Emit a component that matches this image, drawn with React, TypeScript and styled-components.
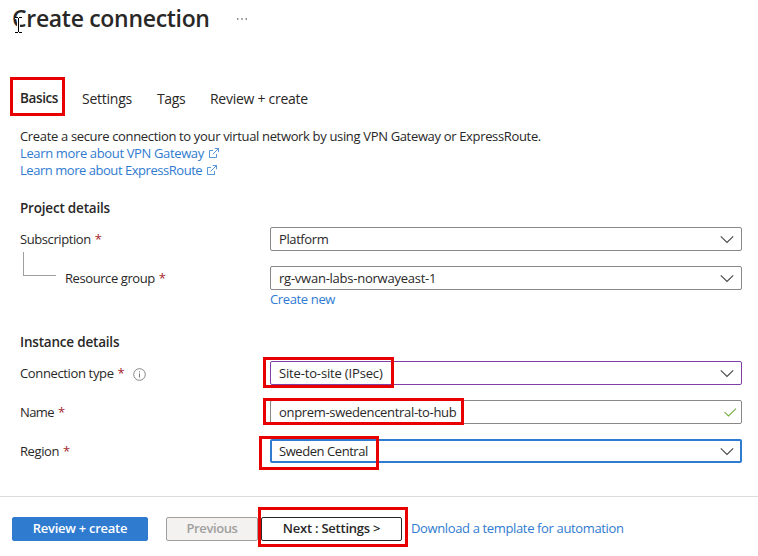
import React from 'react';
import styled, { createGlobalStyle, css } from 'styled-components';

const GlobalStyle = createGlobalStyle`
  * { box-sizing: border-box; }
  body {
    margin: 0;
    background: #fff;
    color: #292827;
    font: 13px/17px "Open Sans", "Noto Sans", sans-serif;
    letter-spacing: -0.36px;
    overflow: hidden;
  }
`;

type Track = { $track?: number };
const tracking = css<Track>`
  ${(p) => p.$track !== undefined && `letter-spacing: ${p.$track}px;`}
`;

const Page = styled.main`
  position: relative;
  width: 758px;
  height: 556px;
  display: flex;
  flex-direction: column;
  white-space: nowrap;
`;

const Header = styled.header`
  display: flex;
  height: 77px;
  padding: 2px 0 0 12px;
`;

const Title = styled.h1`
  margin: 0;
  width: 224px;
  font-size: 23px;
  line-height: 32px;
  font-weight: 600;
  letter-spacing: -0.31px;
`;

const MoreIcon = styled.svg`
  width: 12px;
  height: 2px;
  margin-top: 16px;
`;

const Tabs = styled.nav`
  display: flex;
  height: 42px;
  padding: 13px 0 0 20px;
`;

const Tab = styled.span<Track & { $active?: boolean; $width: number }>`
  width: ${(p) => p.$width}px;
  font-size: ${(p) => (p.$active ? 13.5 : 14)}px;
  font-weight: ${(p) => (p.$active ? 600 : 400)};
  ${tracking}
`;

const Intro = styled.section`
  padding: 9px 0 0 20px;
  height: 81px;
`;

const Paragraph = styled.p`
  margin: 0;
  letter-spacing: -0.34px;
`;

const Link = styled.a<Track>`
  color: #2f7bd0;
  text-decoration: none;
  ${tracking}
`;

const LinkLine = styled.div`
  display: flex;
  align-items: center;
  gap: 5px;
  height: 17px;
`;

const LinkIcon = styled.svg`
  width: 10px;
  height: 10px;
  margin-top: -1px;
`;

const Section = styled.section<{ $height: number }>`
  height: ${(p) => p.$height}px;
  padding: 0 16px 0 20px;
`;

const SectionTitle = styled.h2`
  margin: 0;
  height: 27px;
  font-size: 13.5px;
  line-height: 17px;
  font-weight: 600;
  letter-spacing: -0.2px;
`;

const Row = styled.div`
  display: grid;
  grid-template-columns: 250px 472px;
  height: 24px;
  margin-bottom: 15px;
`;

const Label = styled.label<Track & { $nested?: boolean }>`
  display: flex;
  align-items: flex-start;
  padding-top: 4px;
  padding-left: ${(p) => (p.$nested ? 3 : 0)}px;
  ${tracking}
`;

const Required = styled.span`
  margin-left: 4px;
  color: #a4262c;
  font-size: 13px;
`;

const Branch = styled.span`
  width: 33px;
  height: 24px;
  margin: -18px 9px 0 0;
  border-left: 1px solid #a19f9d;
  border-bottom: 1px solid #a19f9d;
`;

const InfoIcon = styled.svg`
  width: 13px;
  height: 13px;
  margin: 3px 0 0 9px;
`;

const fieldTone = {
  plain: '1px solid #8a8886',
  edited: '1px solid #7f3fa6',
  focused: '2px solid #2f7bd0',
};

const Field = styled.div<Track & { $tone: keyof typeof fieldTone }>`
  display: flex;
  align-items: center;
  justify-content: space-between;
  height: 24px;
  padding: 0 ${(p) => (p.$tone === 'focused' ? 7 : 8)}px;
  border: ${(p) => fieldTone[p.$tone]};
  border-radius: 2px;
  ${tracking}
`;

const FieldHint = styled.div`
  padding-top: 1px;
`;

const FieldIcon = styled.svg<{ $shift?: number }>`
  width: 14px;
  height: 9px;
  margin-right: ${(p) => p.$shift ?? -1}px;
`;

const Footer = styled.footer`
  display: flex;
  height: 60px;
  padding: 20px 0 0 12px;
  border-top: 1px solid #dcdbda;
`;

const buttonTone = {
  primary: css`background: #2f7bd0; border-color: #2f7bd0; color: #fff;`,
  disabled: css`background: #f3f2f1; border-color: #a19f9d; color: #a19f9d;`,
  secondary: css`background: #fff; border-color: #292827; color: #292827;`,
};

const Button = styled.button<Track & { $tone: keyof typeof buttonTone; $width: number; $gap: number }>`
  width: ${(p) => p.$width}px;
  height: 24px;
  margin: 0 ${(p) => p.$gap}px 0 0;
  padding: 0 0 1px;
  border: 1px solid;
  border-radius: 2px;
  font: 600 13px/17px "Open Sans", "Noto Sans", sans-serif;
  ${(p) => buttonTone[p.$tone]}
  ${tracking}
`;

const FooterLink = styled(Link)`
  padding-top: 3px;
`;

const Highlight = styled.div<{ $x: number; $y: number; $w: number; $h: number }>`
  position: absolute;
  left: ${(p) => p.$x}px;
  top: ${(p) => p.$y}px;
  width: ${(p) => p.$w}px;
  height: ${(p) => p.$h}px;
  border: 3px solid #e80000;
  pointer-events: none;
`;

const TextCursor = styled.svg`
  position: absolute;
  left: 15px;
  top: 17px;
  width: 7px;
  height: 16px;
`;

const External = () => (
  <LinkIcon viewBox="0 0 10 10" fill="none" stroke="#2f7bd0" strokeWidth="0.8">
    <path d="M4 2.5H.5v7h7V6M5.8.5h3.7v3.7M9.5.5 3.7 6.3" />
  </LinkIcon>
);

const Chevron = () => (
  <FieldIcon viewBox="0 0 14 9" fill="none" stroke="#484644" strokeWidth="1.1">
    <path d="M.8 1.3 7 7.4l6.2-6.1" />
  </FieldIcon>
);

const Check = () => (
  <FieldIcon $shift={-4} viewBox="0 0 14 9" fill="none" stroke="#76b043" strokeWidth="1.1">
    <path d="M1.5 4.2 5.5 8 13 .7" />
  </FieldIcon>
);

const Info = () => (
  <InfoIcon viewBox="0 0 13 13" fill="none" stroke="#797775">
    <circle cx="6.5" cy="6.5" r="5.8" strokeWidth="0.9" />
    <path d="M6.5 5.5v4M6.5 3.3v1.1" />
  </InfoIcon>
);

export default function App() {
  return (
    <>
      <GlobalStyle />
      <Page>
        <Header>
          <Title>Create connection</Title>
          <MoreIcon viewBox="0 0 12 2" fill="#6b6967">
            <path d="M1 .3h1.4v1.4H1zM5.3.3h1.4v1.4H5.3zM9.6.3H11v1.4H9.6z" />
          </MoreIcon>
        </Header>

        <Tabs>
          <Tab $active $width={62} $track={-0.38}>Basics</Tab>
          <Tab $width={75} $track={-0.24}>Settings</Tab>
          <Tab $width={53} $track={-0.35}>Tags</Tab>
          <Tab $width={110} $track={-0.27}>Review + create</Tab>
        </Tabs>

        <Intro>
          <Paragraph>
            Create a secure connection to your virtual network by using VPN Gateway or ExpressRoute.
          </Paragraph>
          <LinkLine><Link>Learn more about VPN Gateway</Link><External /></LinkLine>
          <LinkLine><Link $track={-0.46}>Learn more about ExpressRoute</Link><External /></LinkLine>
        </Intro>

        <Section $height={134}>
          <SectionTitle>Project details</SectionTitle>
          <Row>
            <Label $track={-0.42}>Subscription<Required>*</Required></Label>
            <Field $tone="plain" $track={-0.4}>Platform<Chevron /></Field>
          </Row>
          <Row>
            <Label $nested $track={-0.42}><Branch />Resource group<Required>*</Required></Label>
            <div>
              <Field $tone="plain" $track={-0.24}>rg-vwan-labs-norwayeast-1<Chevron /></Field>
              <FieldHint><Link>Create new</Link></FieldHint>
            </div>
          </Row>
        </Section>

        <Section $height={162}>
          <SectionTitle>Instance details</SectionTitle>
          <Row>
            <Label $track={-0.36}>Connection type<Required>*</Required><Info /></Label>
            <Field $tone="edited" $track={-0.16}>Site-to-site (IPsec)<Chevron /></Field>
          </Row>
          <Row>
            <Label $track={-0.6}>Name<Required>*</Required></Label>
            <Field $tone="plain" $track={-0.32}>onprem-swedencentral-to-hub<Check /></Field>
          </Row>
          <Row>
            <Label $track={-0.4}>Region<Required>*</Required></Label>
            <Field $tone="focused" $track={-0.44}>Sweden Central<Chevron /></Field>
          </Row>
        </Section>

        <Footer>
          <Button $tone="primary" $width={136} $gap={18} $track={-0.26}>Review + create</Button>
          <Button $tone="disabled" $width={92} $gap={3} $track={-0.4}>Previous</Button>
          <Button $tone="secondary" $width={141} $gap={9} $track={-0.24}>Next : Settings &gt;</Button>
          <FooterLink $track={-0.36}>Download a template for automation</FooterLink>
        </Footer>

        <TextCursor viewBox="0 0 7 16" fill="none" shapeRendering="crispEdges">
          <path d="M0 .5h3M4 .5h3M0 15.5h3M4 15.5h3M3.5 1v14" stroke="#fff" strokeWidth="2.6" />
          <path d="M0 .5h3M4 .5h3M0 15.5h3M4 15.5h3M3.5 1v14" stroke="#000" />
        </TextCursor>
        <Highlight $x={10} $y={77} $w={55} $h={39} />
        <Highlight $x={263} $y={357} $w={131} $h={31} />
        <Highlight $x={263} $y={398} $w={201} $h={27} />
        <Highlight $x={259} $y={436} $w={120} $h={34} />
        <Highlight $x={258} $y={507} $w={150} $h={40} />
      </Page>
    </>
  );
}
